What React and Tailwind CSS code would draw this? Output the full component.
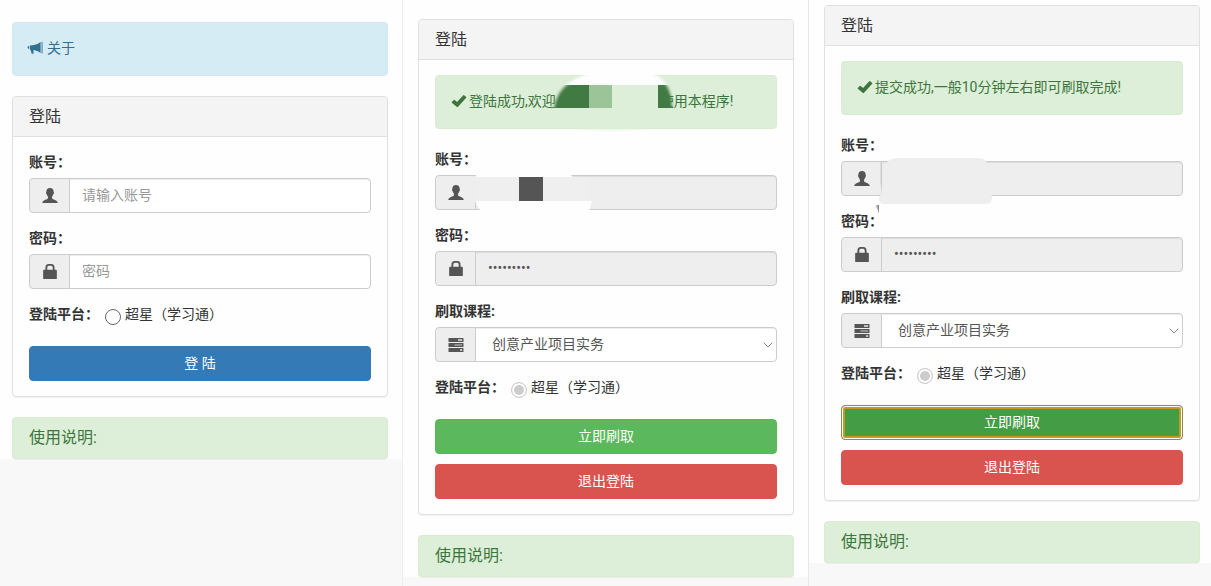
import React, { useId } from "react";

function UserIcon() {
  return (
    <svg viewBox="0 0 14 14" className="size-4" fill="currentColor" aria-hidden="true">
      <path d="M7 0C9 0 10.3 1.2 10.2 3.4 10.6 3.5 10.6 4.9 10 5.2 9.8 6.2 9.3 7 8.8 7.5V9C9 9.7 10.2 10 11.3 10.5 12.8 11.1 13.6 11.7 13.8 13.2H.2C.4 11.7 1.2 11.1 2.7 10.5 3.8 10 5 9.7 5.2 9V7.5C4.7 7 4.2 6.2 4 5.2 3.4 4.9 3.4 3.5 3.8 3.4 3.7 1.2 5 0 7 0Z" />
    </svg>
  );
}

function LockIcon() {
  return (
    <svg viewBox="0 0 14 14" className="size-4" fill="currentColor" aria-hidden="true">
      <path fillRule="evenodd" d="M3 5V3.2Q3 0 5.8 0H8.2Q11 0 11 3.2V5H12.2Q13 5 13 5.8V12.4Q13 13.2 12.2 13.2H1.8Q1 13.2 1 12.4V5.8Q1 5 1.8 5ZM4.6 5H9.4V3.2Q9.4 1.6 8 1.6H6Q4.6 1.6 4.6 3.2Z" />
    </svg>
  );
}

function TasksIcon() {
  return (
    <svg viewBox="0 0 16 16" className="size-4" aria-hidden="true">
      {[1, 6, 11].map((y, i) => (
        <g key={y}>
          <rect x="0.5" y={y} width="15" height="4" rx="0.6" fill="#555" />
          <rect x={[10, 6.5, 12][i]} y={y + 1.3} width={[4.2, 7.7, 2.2][i]} height="1.4" fill={i === 1 ? "#aaa" : "#eee"} />
        </g>
      ))}
    </svg>
  );
}

function BullhornIcon() {
  return (
    <svg viewBox="0 0 16 14" className="h-3.5 w-4 shrink-0" fill="currentColor" aria-hidden="true">
      <path d="M14.6 .7H15.5V12.5H14.6ZM13.6 .9V12C11.3 10.2 9 9.4 6.2 9L6.8 12.4 4.7 12.8 3.5 8.8H2.8V4.6C7.3 4.4 10.7 3 13.6 .9ZM2 4.8V8.2C1.3 8 1.2 7.3 1.2 7 .2 6.6 .2 5.8 1.2 5.4 1.2 5.1 1.6 4.8 2 4.8Z" />
    </svg>
  );
}

function CheckIcon() {
  return (
    <svg viewBox="0 0 14 13" className="h-3.5 w-4 shrink-0" fill="currentColor" aria-hidden="true">
      <path d="M.3 7.5 2.2 5.5Q2.6 5.2 3 5.5L5.2 7.4 11 1.1Q11.4 .8 11.8 1.1L13.7 2.8Q14 3.2 13.7 3.5L5.9 12Q5.5 12.3 5.1 12L.3 8.2Q0 7.9 .3 7.5Z" />
    </svg>
  );
}

/* Mosaic brush stroke hiding the name in the welcome message. */
function NameMosaic() {
  return (
    <svg viewBox="0 0 125 62" className="pointer-events-none absolute -top-1.5 left-[115px] h-[62px] w-[125px]" aria-hidden="true">
      <defs>
        <filter id="soft">
          <feGaussianBlur stdDeviation="1.6" />
        </filter>
        <mask id="stroke" maskUnits="userSpaceOnUse" x="0" y="0" width="125" height="62">
          <path d="M3 39C5 24 14 10 40 3H100C114 8 121 20 121 39C116 52 104 56 92 58C76 60 50 61 22 57C14 55 4 50 3 39Z" fill="white" filter="url(#soft)" />
        </mask>
      </defs>
      <g mask="url(#stroke)">
        <rect width="125" height="15" fill="#fefefe" />
        <rect y="15" width="125" height="47" fill="#ddefd8" />
        <rect y="15" width="38" height="23" fill="#417a42" />
        <rect x="38" y="15" width="23" height="23" fill="#9bc499" />
        <rect x="107" y="15" width="18" height="23" fill="#417a42" />
      </g>
    </svg>
  );
}

/* Mosaic hiding the account number. */
function AccountMosaic() {
  return (
    <svg viewBox="0 0 120 40" className="pointer-events-none absolute -top-[3px] left-10 h-10 w-[120px]" aria-hidden="true">
      <path d="M4 0H92L98 5H0Z" fill="#fefefe" />
      <path d="M0 29H117L114 40H6Z" fill="#fefefe" />
      <rect y="5" width="112" height="24" fill="#efefef" />
      <rect x="44" y="5" width="24" height="24" fill="#555" />
    </svg>
  );
}

/* Smudge hiding the account number. */
function AccountSmudge() {
  return (
    <svg viewBox="0 0 120 56" className="pointer-events-none absolute -top-[3px] left-[34px] h-14 w-[120px]" aria-hidden="true">
      <defs>
        <linearGradient id="smear" x1="0" x2="1">
          <stop offset="0" stopColor="#fff" />
          <stop offset="1" stopColor="#777" />
        </linearGradient>
      </defs>
      <path d="M8 20 9 8Q14 0 22 0H104Q111 0 112 6L117 40Q117 46 110 46H8Q4 46 4 39L6 37Z" fill="#eee" />
      <path d="M6 3.5V27" stroke="#ccc" />
      <path d="M0 47H4V56Q3 50 0 49Z" fill="url(#smear)" />
    </svg>
  );
}

const control =
  "w-full min-w-0 rounded-r border border-[#ccc] pb-0.5 text-sm text-[#555] outline-none placeholder:text-[#999] placeholder:opacity-100 shadow-[inset_0_1px_1px_rgba(0,0,0,0.075)]";

const button = "block h-[35px] w-full rounded border pb-0.5 text-sm text-white";

function Field({ label, icon, children, id, overlay }) {
  return (
    <div className="mb-[15px]">
      <label htmlFor={id} className="mb-1.5 block text-sm font-bold text-[#333]">
        {label}
      </label>
      <div className="relative flex h-[35px]">
        <span className="-mr-px flex w-[41px] shrink-0 items-center justify-center rounded-l border border-[#ccc] bg-[#eee] text-[#555]">
          {icon}
        </span>
        {children}
        {overlay}
      </div>
    </div>
  );
}

function Platform({ disabled }) {
  const id = useId();
  return (
    <fieldset className="mb-[22px]">
      <div className="flex h-5 items-center text-sm text-[#333]">
        <span className="mr-1.5 font-bold">登陆平台：</span>
        <input
          id={id}
          type="radio"
          defaultChecked={disabled}
          disabled={disabled}
          className="mt-1.5 mr-1 size-4 appearance-none rounded-full border border-[#666] bg-white disabled:border-[#ccc] disabled:checked:bg-[#ccc] disabled:checked:shadow-[inset_0_0_0_2px_white]"
        />
        <label htmlFor={id}>超星（学习通）</label>
      </div>
    </fieldset>
  );
}

function Panel({ children }) {
  return (
    <section className="mb-5 rounded border border-[#e0e0e0] bg-[#fefefe] shadow-[0_1px_1px_rgba(0,0,0,0.05)]">
      <header className="flex h-10 items-center rounded-t border-b border-[#e0e0e0] bg-[#f4f4f4] px-4">
        <h3 className="text-base text-[#333]">登陆</h3>
      </header>
      <div className="px-4 py-[15px]">{children}</div>
    </section>
  );
}

function Success({ children }) {
  return (
    <div role="alert" className="relative mb-5 flex h-[54px] items-center gap-0.5 rounded border border-[#d9ecd0] bg-[#ddefd8] px-[15px] pb-0.5 text-sm text-[#3c763d]">
      <CheckIcon />
      {children}
    </div>
  );
}

function Usage() {
  return (
    <section className="flex h-[42px] items-center rounded border border-[#d9ecd0] bg-[#ddefd8] px-4 text-base text-[#3c763d] shadow-[0_1px_1px_rgba(0,0,0,0.05)]">
      <h3>使用说明:</h3>
    </section>
  );
}

function SignedIn({ message, userOverlay, focused }) {
  const id = useId();
  return (
    <>
      <Panel>
        <Success>{message}</Success>
        <Field id={id + "u"} label="账号：" icon={<UserIcon />} overlay={userOverlay}>
          <input id={id + "u"} disabled className={control + " bg-[#eee] px-3"} />
        </Field>
        <Field id={id + "p"} label="密码：" icon={<LockIcon />}>
          <input id={id + "p"} type="password" disabled defaultValue="123456789" className={control + " bg-[#eee] px-3"} />
        </Field>
        <Field
          id={id + "c"}
          label="刷取课程:"
          icon={<TasksIcon />}
          overlay={
            <svg viewBox="0 0 10 6" className="pointer-events-none absolute top-[15px] right-1 h-1.5 w-2.5" fill="none" stroke="#888" aria-hidden="true">
              <path d="M.7.7 5 5 9.3.7" />
            </svg>
          }
        >
          <select id={id + "c"} className={control + " appearance-none bg-white px-4"}>
            <option>创意产业项目实务</option>
          </select>
        </Field>
        <Platform disabled />
        <button
          type="button"
          className={
            button +
            (focused
              ? " mb-2.5 border-[#8f8a50] bg-[#449d44] shadow-[inset_0_0_0_1px_white,inset_0_0_0_3px_#c79a1e]"
              : " mb-2.5 border-[#5cb85c] bg-[#5cb85c]")
          }
        >
          立即刷取
        </button>
        <button type="button" className={button + " border-[#d9534f] bg-[#d9534f]"}>
          退出登陆
        </button>
      </Panel>
      <Usage />
    </>
  );
}

function SignedOut() {
  const id = useId();
  return (
    <>
      <div className="mb-5 flex h-[54px] items-center gap-1 rounded border border-[#cde9f1] bg-[#d6ecf5] px-3.5 pb-0.5 text-sm text-[#31708f]">
        <BullhornIcon />
        关于
      </div>
      <Panel>
        <Field id={id + "u"} label="账号：" icon={<UserIcon />}>
          <input id={id + "u"} placeholder="请输入账号" className={control + " bg-white px-3"} />
        </Field>
        <Field id={id + "p"} label="密码：" icon={<LockIcon />}>
          <input id={id + "p"} type="password" placeholder="密码" className={control + " bg-white px-3"} />
        </Field>
        <Platform />
        <button type="button" className={button + " border-[#337ab7] bg-[#337ab7]"}>
          登 陆
        </button>
      </Panel>
      <Usage />
    </>
  );
}

export default function App() {
  return (
    <main
      className="grid min-h-screen grid-cols-[403fr_406fr_402fr] bg-[#f8f8f8] leading-5"
      style={{ fontFamily: 'Roboto, "Noto Sans CJK SC", sans-serif' }}
    >
      <div className="min-w-0 border-r border-[#eee]">
        <div className="bg-[#fefefe] pt-[22px] pr-3.5 pl-3">
          <SignedOut />
        </div>
      </div>
      <div className="min-w-0 border-r border-[#e8e8e8]">
        <div className="bg-[#fefefe] pt-[19px] pr-3.5 pl-[15px]">
          <SignedIn
            message={
              <>
                <span>登陆成功,欢迎</span>
                <span className="ml-[102px]">使用本程序!</span>
                <NameMosaic />
              </>
            }
            userOverlay={<AccountMosaic />}
          />
        </div>
      </div>
      <div className="min-w-0">
        <div className="bg-[#fefefe] pt-[5px] pr-[11px] pl-[15px]">
          <SignedIn focused message={<span>提交成功,一般10分钟左右即可刷取完成!</span>} userOverlay={<AccountSmudge />} />
        </div>
      </div>
    </main>
  );
}
